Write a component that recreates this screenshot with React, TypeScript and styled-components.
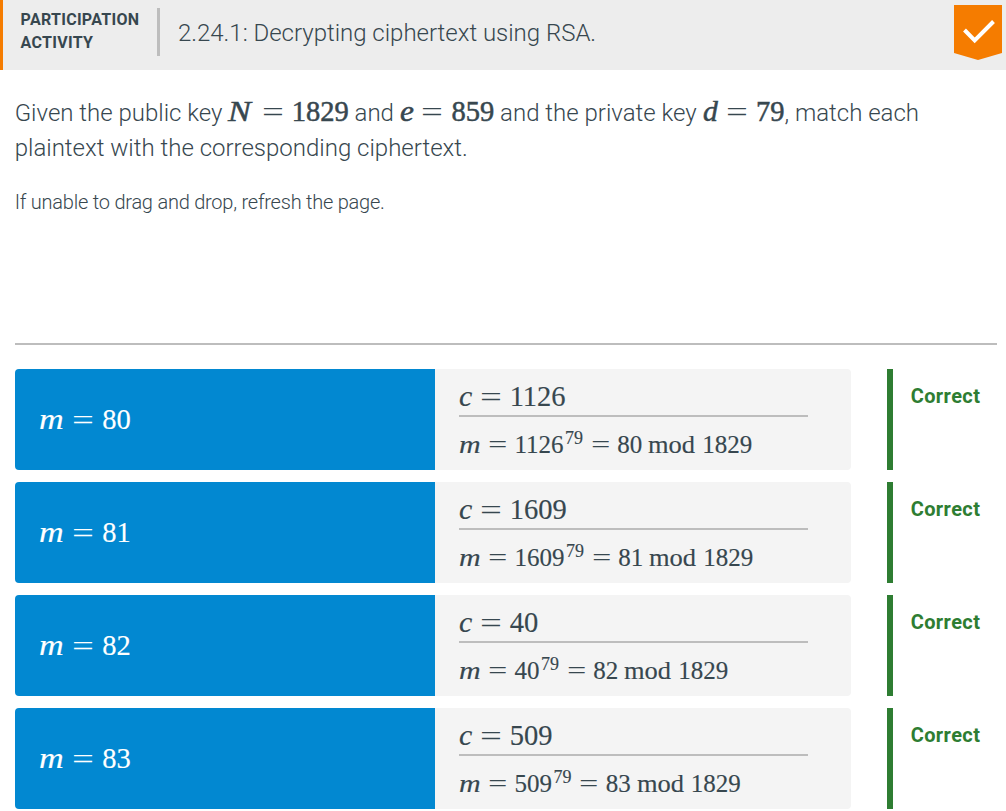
import React from "react";
import styled, { createGlobalStyle } from "styled-components";

const GlobalStyle = createGlobalStyle`
  * { box-sizing: border-box; }
  body {
    margin: 0;
    background: #fff;
    color: #37474f;
    font-family: Roboto, "Liberation Sans", sans-serif;
    font-weight: 300;
    overflow: hidden;
  }
`;

const Header = styled.header`
  display: flex;
  align-items: flex-start;
  height: 70px;
  border-left: 3px solid #f57c00;
  background: #ededed;
`;

const ActivityType = styled.div`
  width: 157px;
  height: 48px;
  margin-top: 8px;
  padding-left: 17.6px;
  border-right: 3px solid #bdbdbd;
  font-size: 16px;
  font-weight: 700;
  letter-spacing: 0.28px;
  line-height: 23px;
`;

const Title = styled.h1`
  flex: 1;
  margin: 0;
  padding: 17px 0 0 18px;
  font-size: 24px;
  font-weight: 300;
  letter-spacing: -0.015px;
  line-height: 32px;
`;

const Badge = styled.svg`
  display: block;
  width: 48px;
  height: 55px;
  margin: 5px 4px 0 0;
`;

const Content = styled.main`
  padding: 26px 9px 0 15px;
`;

const Prompt = styled.p`
  margin: 0 0 0 -0.3px;
  font-size: 24px;
  line-height: 35px;
`;

const Note = styled.p`
  margin: 0 0 0 -0.3px;
  padding-top: 20px;
  height: 177px;
  font-size: 20px;
  letter-spacing: -0.23px;
  line-height: 32px;
`;

const Rows = styled.div`
  display: flex;
  flex-direction: column;
  gap: 12px;
  padding-top: 24px;
  border-top: 2px solid #bdbdbd;
`;

const Row = styled.section`
  display: flex;
  height: 101px;
`;

const Term = styled.div`
  display: flex;
  align-items: center;
  width: 420px;
  padding: 2px 0 0 24px;
  border-radius: 4px 0 0 4px;
  background: #0288d1;
  color: #fff;
`;

const Definition = styled.div`
  width: 416px;
  padding: 10px 43px 0 24px;
  border-radius: 0 4px 4px 0;
  background: #f4f4f4;
`;

const Cipher = styled.div`
  height: 38px;
  padding-top: 4px;
  border-bottom: 2px solid #bdbdbd;
  line-height: 34px;
`;

const Explanation = styled.div`
  padding-top: 12px;
  line-height: 32px;
`;

const Result = styled.div`
  margin-left: 36px;
  padding: 11px 0 0 17.7px;
  border-left: 6px solid #2e7d32;
  color: #2e7d32;
  font-size: 20px;
  font-weight: 700;
  letter-spacing: 0.4px;
  line-height: 32px;
`;

const Formula = styled.span<{ $size?: number; $bold?: boolean }>`
  display: inline-block;
  font-family: "Liberation Serif", serif;
  font-size: ${(p) => p.$size ?? 28.5}px;
  font-weight: 400;
  letter-spacing: 0;
  line-height: 1;
  white-space: nowrap;
  -webkit-text-stroke: ${(p) => (p.$bold ? "0.5px" : "0.15px")} currentColor;
`;

const Glyph = styled.span<{ $width: number; $stretch: number; $italic?: boolean }>`
  display: inline-block;
  width: ${(p) => p.$width}em;
  font-style: ${(p) => (p.$italic ? "italic" : "normal")};
  transform: scaleX(${(p) => p.$stretch});
  transform-origin: left center;
`;

const EqualSign = styled.span`
  display: inline-block;
  width: 0.778em;
  margin: 0 0.278em;
  font-family: Roboto, sans-serif;
  font-weight: 300;
  text-align: center;
  -webkit-text-stroke: 0;
  transform: scaleX(1.55);
`;

const Power = styled.sup`
  display: inline-block;
  margin: 0 0.05em 0 0.08em;
  font-size: 0.72em;
  line-height: 1;
  vertical-align: 0.52em;
`;

const shapes: Record<string, [number, number]> = {
  m: [0.888, 1.2],
  c: [0.443, 1.05],
  N: [0.888, 1.2],
  e: [0.48, 1.1],
  d: [0.54, 1.04],
};

function Variable({ name }: { name: string }) {
  const [width, stretch] = shapes[name];
  return <Glyph $width={width} $stretch={stretch} $italic>{name}</Glyph>;
}

function Equation({ name, value, bold }: { name: string; value: number; bold?: boolean }) {
  return (
    <Formula $bold={bold}>
      <Variable name={name} />
      <EqualSign>=</EqualSign>
      {value}
    </Formula>
  );
}

const pairs = [
  { m: 80, c: 1126 },
  { m: 81, c: 1609 },
  { m: 82, c: 40 },
  { m: 83, c: 509 },
];

export default function App() {
  return (
    <>
      <GlobalStyle />
      <Header>
        <ActivityType>PARTICIPATION<br />ACTIVITY</ActivityType>
        <Title>2.24.1: Decrypting ciphertext using RSA.</Title>
        <Badge viewBox="0 0 48 55" aria-label="Completed">
          <path d="M0 0H48V48L24 55L0 48Z" fill="#f57c00" />
          <path d="M10.5 25L20.7 35.5L39.5 16.5" fill="none" stroke="#fff" strokeWidth="4" />
        </Badge>
      </Header>
      <Content>
        <Prompt>
          Given the public key <Equation name="N" value={1829} bold /> and{" "}
          <Equation name="e" value={859} bold /> and the private key{" "}
          <Equation name="d" value={79} bold />, match each<br />
          plaintext with the corresponding ciphertext.
        </Prompt>
        <Note>If unable to drag and drop, refresh the page.</Note>
        <Rows>
          {pairs.map(({ m, c }) => (
            <Row key={m}>
              <Term><Equation name="m" value={m} /></Term>
              <Definition>
                <Cipher><Equation name="c" value={c} /></Cipher>
                <Explanation>
                  <Formula $size={25}>
                    <Variable name="m" />
                    <EqualSign>=</EqualSign>
                    {c}<Power>79</Power>
                    <EqualSign>=</EqualSign>
                    {m} <Glyph $width={1.9} $stretch={1.06}>mod</Glyph> {1829}
                  </Formula>
                </Explanation>
              </Definition>
              <Result>Correct</Result>
            </Row>
          ))}
        </Rows>
      </Content>
    </>
  );
}
